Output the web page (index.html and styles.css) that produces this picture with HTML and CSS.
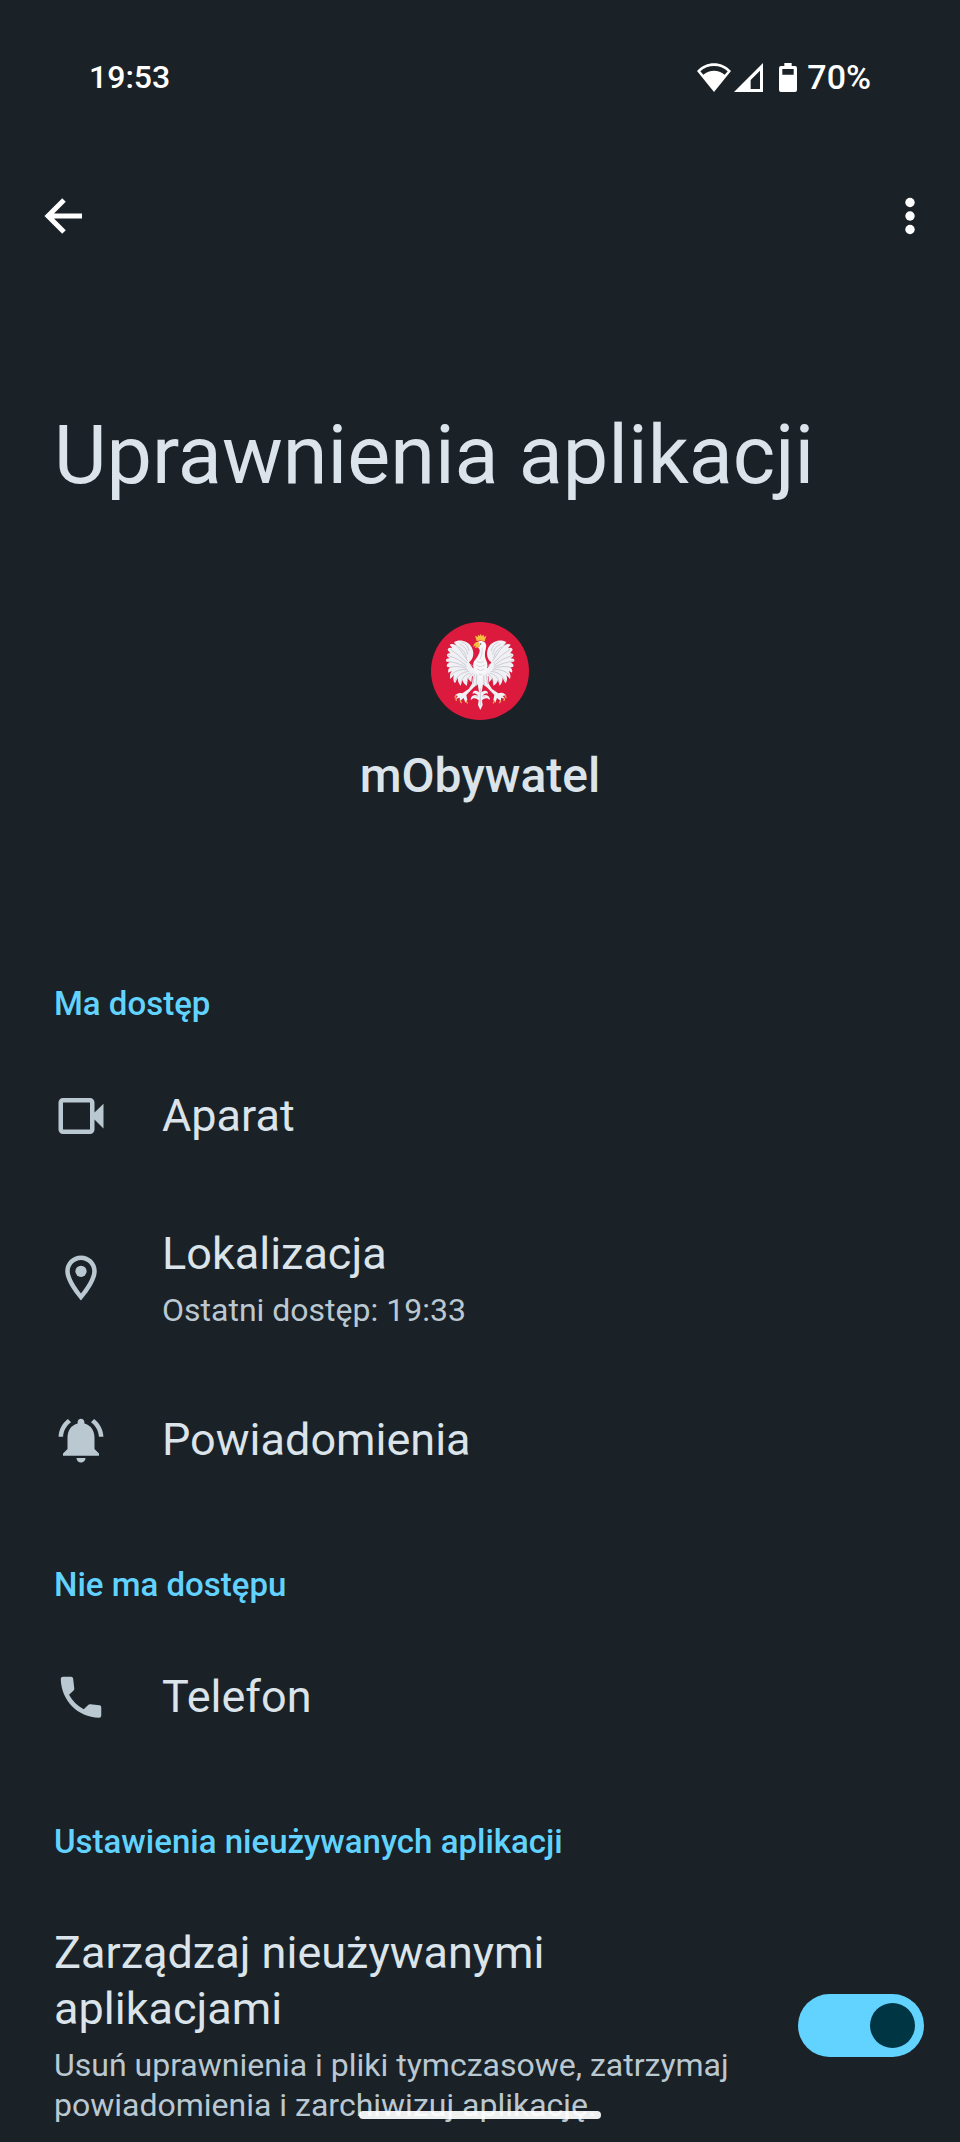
FILE: index.html
```html
<!DOCTYPE html>
<html lang="pl">
<head>
    <meta charset="UTF-8">
    <meta name="viewport" content="width=device-width, initial-scale=1.0">
    <title>Uprawnienia aplikacji</title>
    <link rel="stylesheet" href="styles.css">
</head>
<body>
    <div class="status-bar">
        <span class="clock">19:53</span>
        <div class="status-icons">
            <svg class="wifi" viewBox="114 67 102 87" aria-hidden="true">
                <path fill="#fff" fill-rule="evenodd" d="M114 91C142 60 188 60 216 91L165 154ZM124 92L133 102C152 86 178 86 197 102L206 92C184 71 146 71 124 92Z"/>
            </svg>
            <svg class="signal" viewBox="225 68 87 87" aria-hidden="true">
                <path fill="#fff" fill-rule="evenodd" d="M225 155L312 68V155ZM275 119V146H303V91Z"/>
            </svg>
            <svg class="battery" viewBox="360 66 54 87" aria-hidden="true">
                <path fill="#fff" fill-rule="evenodd" d="M376 66H398V75H408Q414 75 414 81V147Q414 153 408 153H366Q360 153 360 147V81Q360 75 366 75H376ZM370 84V101H404V84Z"/>
            </svg>
            <span class="percent">70%</span>
        </div>
    </div>

    <header class="toolbar">
        <button type="button" class="icon-button" aria-label="Wstecz">
            <svg viewBox="0 0 54 54" aria-hidden="true">
                <path d="M45 27H12M27 11L11 27L27 43" fill="none" stroke="#fff" stroke-width="5"/>
            </svg>
        </button>
        <button type="button" class="icon-button" aria-label="Więcej opcji">
            <svg viewBox="0 0 54 54" fill="#fff" aria-hidden="true">
                <circle cx="27" cy="13.5" r="4.7"/>
                <circle cx="27" cy="27" r="4.7"/>
                <circle cx="27" cy="40.5" r="4.7"/>
            </svg>
        </button>
    </header>

    <main>
        <h1>Uprawnienia aplikacji</h1>

        <div class="app">
            <svg class="app-icon" viewBox="93 66 294 294" aria-hidden="true">
                <circle cx="240" cy="213" r="147" fill="#dc1a3e"/>
                <!-- wings -->
                <g id="wing">
                    <path fill="#f1f1f5" d="M232 202C225 207 217 205 214 197L207 187C218 179 222 165 219 153C216 137 204 126 190 123C180 120 169 122 162 126L170 137C161 131 153 131 149 134L157 145C149 141 144 144 143 150L151 160C144 159 140 162 141 168L149 175C140 175 137 178 138 184L149 188C140 191 139 196 142 201L151 201C145 206 143 212 145 218L155 213C149 222 149 229 151 237L162 225C158 236 160 244 165 250L173 234C174 246 177 252 182 257L187 240C190 249 194 254 201 257L203 235L214 247L216 228L231 236Z"/>
                    <path fill="none" stroke="#b9bac6" stroke-width="2" d="M163 130Q184 150 203 183M151 148Q175 163 201 190M144 166Q173 174 199 196M142 183Q171 188 200 201M146 203Q172 195 200 206M152 227Q170 204 204 210M166 242Q176 217 208 214M183 249Q187 225 212 219M201 248Q203 230 219 220M185 126Q205 134 207 153M179 132Q200 142 203 164M176 140Q195 151 200 175M211 192Q222 202 230 204"/>
                </g>
                <use href="#wing" transform="matrix(-1 0 0 1 481 0)"/>
                <!-- legs and tail -->
                <path fill="#f1f1f5" d="M221 211L216 251L206 267L187 280C179 277 170 280 165 286L174 288L166 297L179 293L180 304L191 294L196 308L202 300L199 285L220 263L233 253L237 277C226 268 217 273 218 282C222 277 229 281 235 287C223 282 210 289 213 301C220 291 229 295 236 301L234 315L241 330L248 315L246 301C253 295 262 291 269 301C272 289 259 282 247 287C253 281 260 277 264 282C265 273 256 268 245 277L249 253L262 263L283 285L280 300L286 308L291 294L303 304L303 293L316 297L308 288L318 286C312 278 303 277 295 280L276 267L266 251L261 211Z"/>
                <path fill="none" stroke="#b9bac6" stroke-width="2" d="M223 223L219 253M231 219L228 258M258 223L263 253M250 219L253 258M241 265V316M235 289L225 287M247 289L257 287"/>
                <!-- body and head -->
                <path fill="#f7f7fa" d="M227 139C228 126 236 122 246 123C258 125 261 136 257 148C253 162 254 174 261 187C265 202 257 216 250 227L241 248L232 225C222 211 216 197 222 184C230 174 240 160 239 149L234 142Z"/>
                <path fill="none" stroke="#c4c5cf" stroke-width="2" d="M247 143Q248 164 240 177M231 183Q241 193 252 182M229 195Q241 205 255 194M231 207Q241 216 253 207M236 222Q241 227 247 222"/>
                <!-- crown, beak and claws -->
                <path fill="#f6bd43" d="M230 123L225 107L233 111L234 104L239 108L242 101L245 108L251 104L252 111L259 107L254 124Q242 119 230 123ZM234 125C225 126 220 132 220 141L229 135L224 144L239 141L240 133Z"/>
                <circle cx="242" cy="132" r="2" fill="#444"/>
                <path fill="none" stroke="#eda54c" stroke-width="4" stroke-linecap="round" d="M168 286L165 292M168 297L169 301M181 303L184 308M199 304L202 309M315 286L318 292M314 297L312 301M302 303L299 308M283 304L280 309"/>
            </svg>
            <p class="app-name">mObywatel</p>
        </div>

        <section>
            <h2>Ma dostęp</h2>
            <a class="row" href="#aparat">
                <svg class="row-icon" viewBox="0 0 24 24" aria-hidden="true">
                    <path d="M18 10.48V6c0-1.1-.9-2-2-2H4c-1.1 0-2 .9-2 2v12c0 1.1.9 2 2 2h12c1.1 0 2-.9 2-2v-4.48l4 3.98v-11l-4 3.98zM16 18H4V6h12v12z"/>
                </svg>
                <span class="row-text"><span class="row-title">Aparat</span></span>
            </a>
            <a class="row" href="#lokalizacja">
                <svg class="row-icon" viewBox="0 0 24 24" aria-hidden="true">
                    <path d="M12 2C8.13 2 5 5.13 5 9c0 5.25 7 13 7 13s7-7.75 7-13c0-3.87-3.13-7-7-7zM7 9c0-2.76 2.24-5 5-5s5 2.24 5 5c0 2.88-2.88 7.19-5 9.88C9.92 16.21 7 11.85 7 9z"/>
                    <circle cx="12" cy="9" r="2.5"/>
                </svg>
                <span class="row-text">
                    <span class="row-title">Lokalizacja</span>
                    <span class="row-summary">Ostatni dostęp: 19:33</span>
                </span>
            </a>
            <a class="row" href="#powiadomienia">
                <svg class="row-icon" viewBox="0 0 24 24" aria-hidden="true">
                    <path d="M7.58 4.08L6.15 2.65C3.75 4.48 2.17 7.3 2.03 10.5h2c.15-2.65 1.51-4.97 3.55-6.42zm12.39 6.42h2c-.15-3.2-1.73-6.02-4.12-7.85l-1.42 1.43c2.02 1.45 3.39 3.77 3.54 6.42zM18 11c0-3.07-1.64-5.64-4.5-6.32V4c0-.83-.67-1.5-1.5-1.5s-1.5.67-1.5 1.5v.68C7.63 5.36 6 7.92 6 11v5l-2 2v1h16v-1l-2-2v-5zm-6 11c.14 0 .27-.01.4-.04.65-.14 1.18-.58 1.44-1.18.1-.24.15-.5.15-.78h-4c.01 1.1.9 2 2.01 2z"/>
                </svg>
                <span class="row-text"><span class="row-title">Powiadomienia</span></span>
            </a>
        </section>

        <section>
            <h2>Nie ma dostępu</h2>
            <a class="row" href="#telefon">
                <svg class="row-icon" viewBox="0 0 24 24" aria-hidden="true">
                    <path d="M4 3H7.6Q8.4 3 8.5 3.8L9 8.1Q9.1 8.7 8.7 9.1L6.7 11Q9 15.3 13.2 17.4L15.2 15.5Q15.6 15.1 16.2 15.2L20.2 15.7Q21 15.8 21 16.6V20.2Q21 21.2 20 21.2C10.5 21 3.2 13.5 3 4Q3 3 4 3Z"/>
                </svg>
                <span class="row-text"><span class="row-title">Telefon</span></span>
            </a>
        </section>

        <section>
            <h2>Ustawienia nieużywanych aplikacji</h2>
            <label class="row row-switch" for="manage">
                <span class="row-text">
                    <span class="row-title">Zarządzaj nieużywanymi aplikacjami</span>
                    <span class="row-summary">Usuń uprawnienia i pliki tymczasowe, zatrzymaj powiadomienia i zarchiwizuj aplikację.</span>
                </span>
                <input type="checkbox" class="switch" id="manage" role="switch" checked>
            </label>
        </section>
    </main>

    <div class="nav-handle"></div>
</body>
</html>
```
FILE: styles.css
```css
* {
    box-sizing: border-box;
}
body {
    margin: 0;
    background-color: #1a2127;
    color: #dbe4ea;
    font-family: Roboto, "Noto Sans", sans-serif;
}
.status-bar {
    display: flex;
    justify-content: space-between;
    align-items: center;
    height: 154px;
    padding: 0 89px;
    color: #fff;
    font-size: 32px;
    font-weight: 500;
}
.status-icons {
    display: flex;
    align-items: center;
}
.percent {
    font-size: 34px;
}
.wifi {
    width: 34px;
    height: 29px;
}
.signal {
    width: 29px;
    height: 29px;
    margin-left: 3px;
}
.battery {
    width: 18px;
    height: 29px;
    margin: 0 10px 0 16px;
}
.toolbar {
    display: flex;
    justify-content: space-between;
    align-items: center;
    height: 124px;
    padding: 0 23px 0 37px;
}
.icon-button {
    width: 54px;
    height: 54px;
    padding: 0;
    border: none;
    background: none;
    cursor: pointer;
}
.icon-button svg {
    display: block;
    width: 54px;
    height: 54px;
}
h1 {
    margin: 0;
    padding: 130px 54px 0;
    font-size: 81px;
    font-weight: 400;
    line-height: 96px;
}
.app {
    display: flex;
    flex-direction: column;
    align-items: center;
    padding: 118px 54px 127px;
}
.app-icon {
    width: 98px;
    height: 98px;
}
.app-name {
    margin: 28px 0 0;
    font-size: 48px;
    font-weight: 500;
    line-height: 56px;
}
h2 {
    margin: 0;
    padding: 53px 54px 20px;
    color: #62d3ff;
    font-size: 33px;
    font-weight: 500;
    line-height: 40px;
}
.row {
    display: flex;
    align-items: center;
    gap: 54px;
    min-height: 144px;
    padding: 38px 36px 38px 54px;
    color: inherit;
    text-decoration: none;
    cursor: pointer;
}
.row-switch {
    padding-top: 43px;
    padding-bottom: 16px;
}
.row-icon {
    flex: none;
    width: 54px;
    height: 54px;
    fill: #bac8d1;
}
.row-text {
    flex: 1;
}
.row-title {
    display: block;
    font-size: 45px;
    line-height: 56px;
}
.row-summary {
    display: block;
    margin-top: 8px;
    color: #bac8d1;
    font-size: 32px;
    line-height: 40px;
}
.switch {
    appearance: none;
    display: flex;
    align-items: center;
    flex: none;
    width: 126px;
    height: 63px;
    margin: 0;
    padding: 0 9px;
    border-radius: 32px;
    background-color: #4a555c;
    cursor: pointer;
}
.switch::before {
    content: "";
    width: 45px;
    height: 45px;
    border-radius: 50%;
    background-color: #003544;
}
.switch:checked {
    justify-content: flex-end;
    background-color: #62d3ff;
}
.nav-handle {
    position: fixed;
    bottom: 23px;
    left: 50%;
    width: 242px;
    height: 8px;
    margin-left: -121px;
    border-radius: 4px;
    background-color: rgba(255, 255, 255, 0.93);
}
```
